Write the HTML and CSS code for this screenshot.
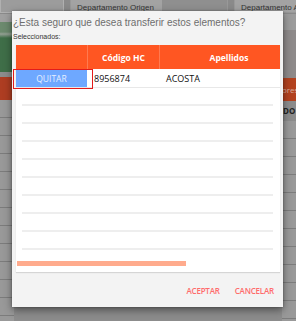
FILE: index.html
```html
<!DOCTYPE html>
<html>
<head>
<meta charset="utf-8">
<link rel="stylesheet" href="styles.css">
</head>
<body>
<div class="app">
  <div class="app-top">
    <div class="app-box first"></div>
    <div class="app-box field"><span class="app-label">Departamento Origen</span><span class="app-input"></span></div>
    <div class="app-box field last"><span class="app-label">Departamento Actual</span></div>
  </div>
  <div class="app-body">
    <div class="app-side left">
      <div class="band grey1"></div>
      <div class="band green"></div>
      <div class="band red"></div>
      <div class="rows"></div>
    </div>
    <div class="app-side right">
      <div class="band grey1"></div>
      <div class="band grey2"></div>
      <div class="band red"><span>ores</span></div>
      <div class="band text"><span>DO</span></div>
      <div class="rows"></div>
    </div>
  </div>
</div>

<div class="dialog">
  <div class="title">¿Esta seguro que desea transferir estos elementos?</div>
  <div class="label">Seleccionados:</div>
  <div class="panel">
    <div class="thead">
      <div class="th"></div>
      <div class="th">Código HC</div>
      <div class="th ap">Apellidos</div>
    </div>
    <div class="tr">
      <div class="td first"><span class="quitar">QUITAR</span></div>
      <div class="td">8956874</div>
      <div class="td">ACOSTA</div>
      <div class="highlight"></div>
    </div>
    <div class="empty"></div>
    <div class="empty"></div>
    <div class="empty"></div>
    <div class="empty"></div>
    <div class="empty"></div>
    <div class="empty"></div>
    <div class="empty"></div>
    <div class="empty"></div>
    <div class="empty"></div>
    <div class="scroll"><div class="thumb"></div></div>
  </div>
  <div class="actions">
    <span class="btn">ACEPTAR</span>
    <span class="btn">CANCELAR</span>
  </div>
</div>
</body>
</html>
```
FILE: styles.css
```css
* { box-sizing: border-box; }
html, body { margin: 0; padding: 0; }
body {
  width: 296px;
  height: 321px;
  overflow: hidden;
  background: #8c8c8c;
  font-family: "Open Sans", "Liberation Sans", sans-serif;
  position: relative;
}
.app { width: 296px; height: 321px; overflow: hidden; }
.app-top { height: 14px; display: flex; gap: 6px; background: #8a8a8a; overflow: hidden; }
.app-box { height: 13px; background: #a6a6a6; border: 1px solid #999; border-top: none; overflow: hidden; }
.app-box.first { width: 64px; flex: none; background: #9c9c9c; border-color: #b0b0b0; }
.app-box.field { width: 158px; flex: none; display: flex; align-items: flex-start; padding-left: 6px; background: #a3a3a3; gap: 8px; }
.app-box.last { flex: 1; width: auto; border-right: none; }
.app-label { font-family: "Liberation Sans", sans-serif; font-size: 8px; line-height: 12px; padding-top: 2px; color: #333; white-space: nowrap; }
.app-input { width: 69px; height: 12px; background: #8f8f8f; flex: none; }
.app-body { height: 307px; display: flex; justify-content: space-between; }
.app-side { width: 14px; display: flex; flex-direction: column; overflow: hidden; }
.band { flex: none; }
.app-side.left .grey1 { height: 8px; background: #a0a0a0; }
.app-side.left .green { height: 50px; background: linear-gradient(#6c8a6e 0, #6c8a6e 10px, #94a094 12px, #3f6e48 16px, #3f6e48 100%); }
.app-side.left .red { height: 23px; background: #ae3d22; margin-top: 5px; }
.app-side.right .grey1 { height: 16px; background: #9c9c9c; }
.app-side.right .grey2 { height: 48px; background: #8e8a8a; }
.app-side.right .red { height: 23px; background: #b3421f; font-size: 8px; color: #d8b0a0; line-height: 23px; white-space: nowrap; overflow: hidden; }
.app-side.right .text { height: 20px; font-size: 8px; font-weight: bold; color: #222; line-height: 20px; white-space: nowrap; padding-left: 1px; overflow: hidden; }
.rows { flex: 1; background: repeating-linear-gradient(#999 0, #999 17px, #7c7c7c 17px, #7c7c7c 18px); }

.dialog {
  position: absolute;
  left: 12px;
  top: 11px;
  width: 271px;
  height: 296px;
  background: #f3f3f3;
  box-shadow: 0 3px 8px rgba(0,0,0,0.45), 0 0 2px rgba(0,0,0,0.3);
  display: flex;
  flex-direction: column;
  z-index: 2;
}
.title {
  font-family: "Liberation Sans", sans-serif;
  font-size: 10px;
  color: #6e6e6e;
  height: 20px;
  line-height: 18px;
  padding: 3px 0 0 1px;
  white-space: nowrap;
}
.label {
  font-family: "Liberation Sans", sans-serif;
  font-size: 7px;
  color: #333;
  height: 14px;
  line-height: 12px;
  padding-left: 1px;
}
.panel {
  margin-left: 4px;
  width: 264px;
  height: 227px;
  flex: none;
  background: #fff;
  position: relative;
  display: flex;
  flex-direction: column;
  box-shadow: 0 1px 1px rgba(0,0,0,0.12);
}
.thead {
  height: 24px;
  flex: none;
  display: grid;
  grid-template-columns: 71px 72px 1fr;
  background: #ff5622;
}
.th {
  color: #fff;
  font-family: "Open Sans", sans-serif;
  font-weight: 700;
  font-size: 8.5px;
  display: flex;
  align-items: center;
  justify-content: center;
  border-left: 1px solid #ff7a50;
}
.th:first-child { border-left: none; }
.th.ap { padding-left: 18px; }
.tr {
  height: 19px;
  flex: none;
  display: grid;
  grid-template-columns: 71px 72px 1fr;
  border-bottom: 1px solid #e8e8e8;
  position: relative;
}
.td {
  font-family: "Open Sans", sans-serif;
  font-size: 9px;
  color: #111;
  display: flex;
  align-items: center;
  padding-left: 7px;
}
.td.first { padding: 1px 0; align-items: stretch; }
.quitar {
  width: 71px;
  height: 17px;
  background: #6ea8ff;
  color: #e6efff;
  font-family: "Open Sans", sans-serif;
  font-size: 8.5px;
  display: flex;
  align-items: center;
  justify-content: center;
}
.highlight {
  position: absolute;
  left: -3px;
  top: 0;
  width: 80px;
  height: 20px;
  border: 1.5px solid #e31b1b;
}
.empty {
  height: 18px;
  flex: none;
  margin: 0 7px 0 6px;
  border-bottom: 2px solid #eeeeee;
}
.scroll {
  flex: 1;
  position: relative;
}
.thumb {
  position: absolute;
  left: 1px;
  top: 11px;
  width: 169px;
  height: 5px;
  background: #ffab8d;
}
.actions {
  flex: 1;
  display: flex;
  justify-content: flex-end;
  align-items: center;
  gap: 15px;
  padding: 2px 9px 0 0;
}
.btn {
  font-family: "Open Sans", sans-serif;
  font-size: 8px;
  font-weight: 600;
  color: #ff6b6b;
  letter-spacing: -0.2px;
}
```
